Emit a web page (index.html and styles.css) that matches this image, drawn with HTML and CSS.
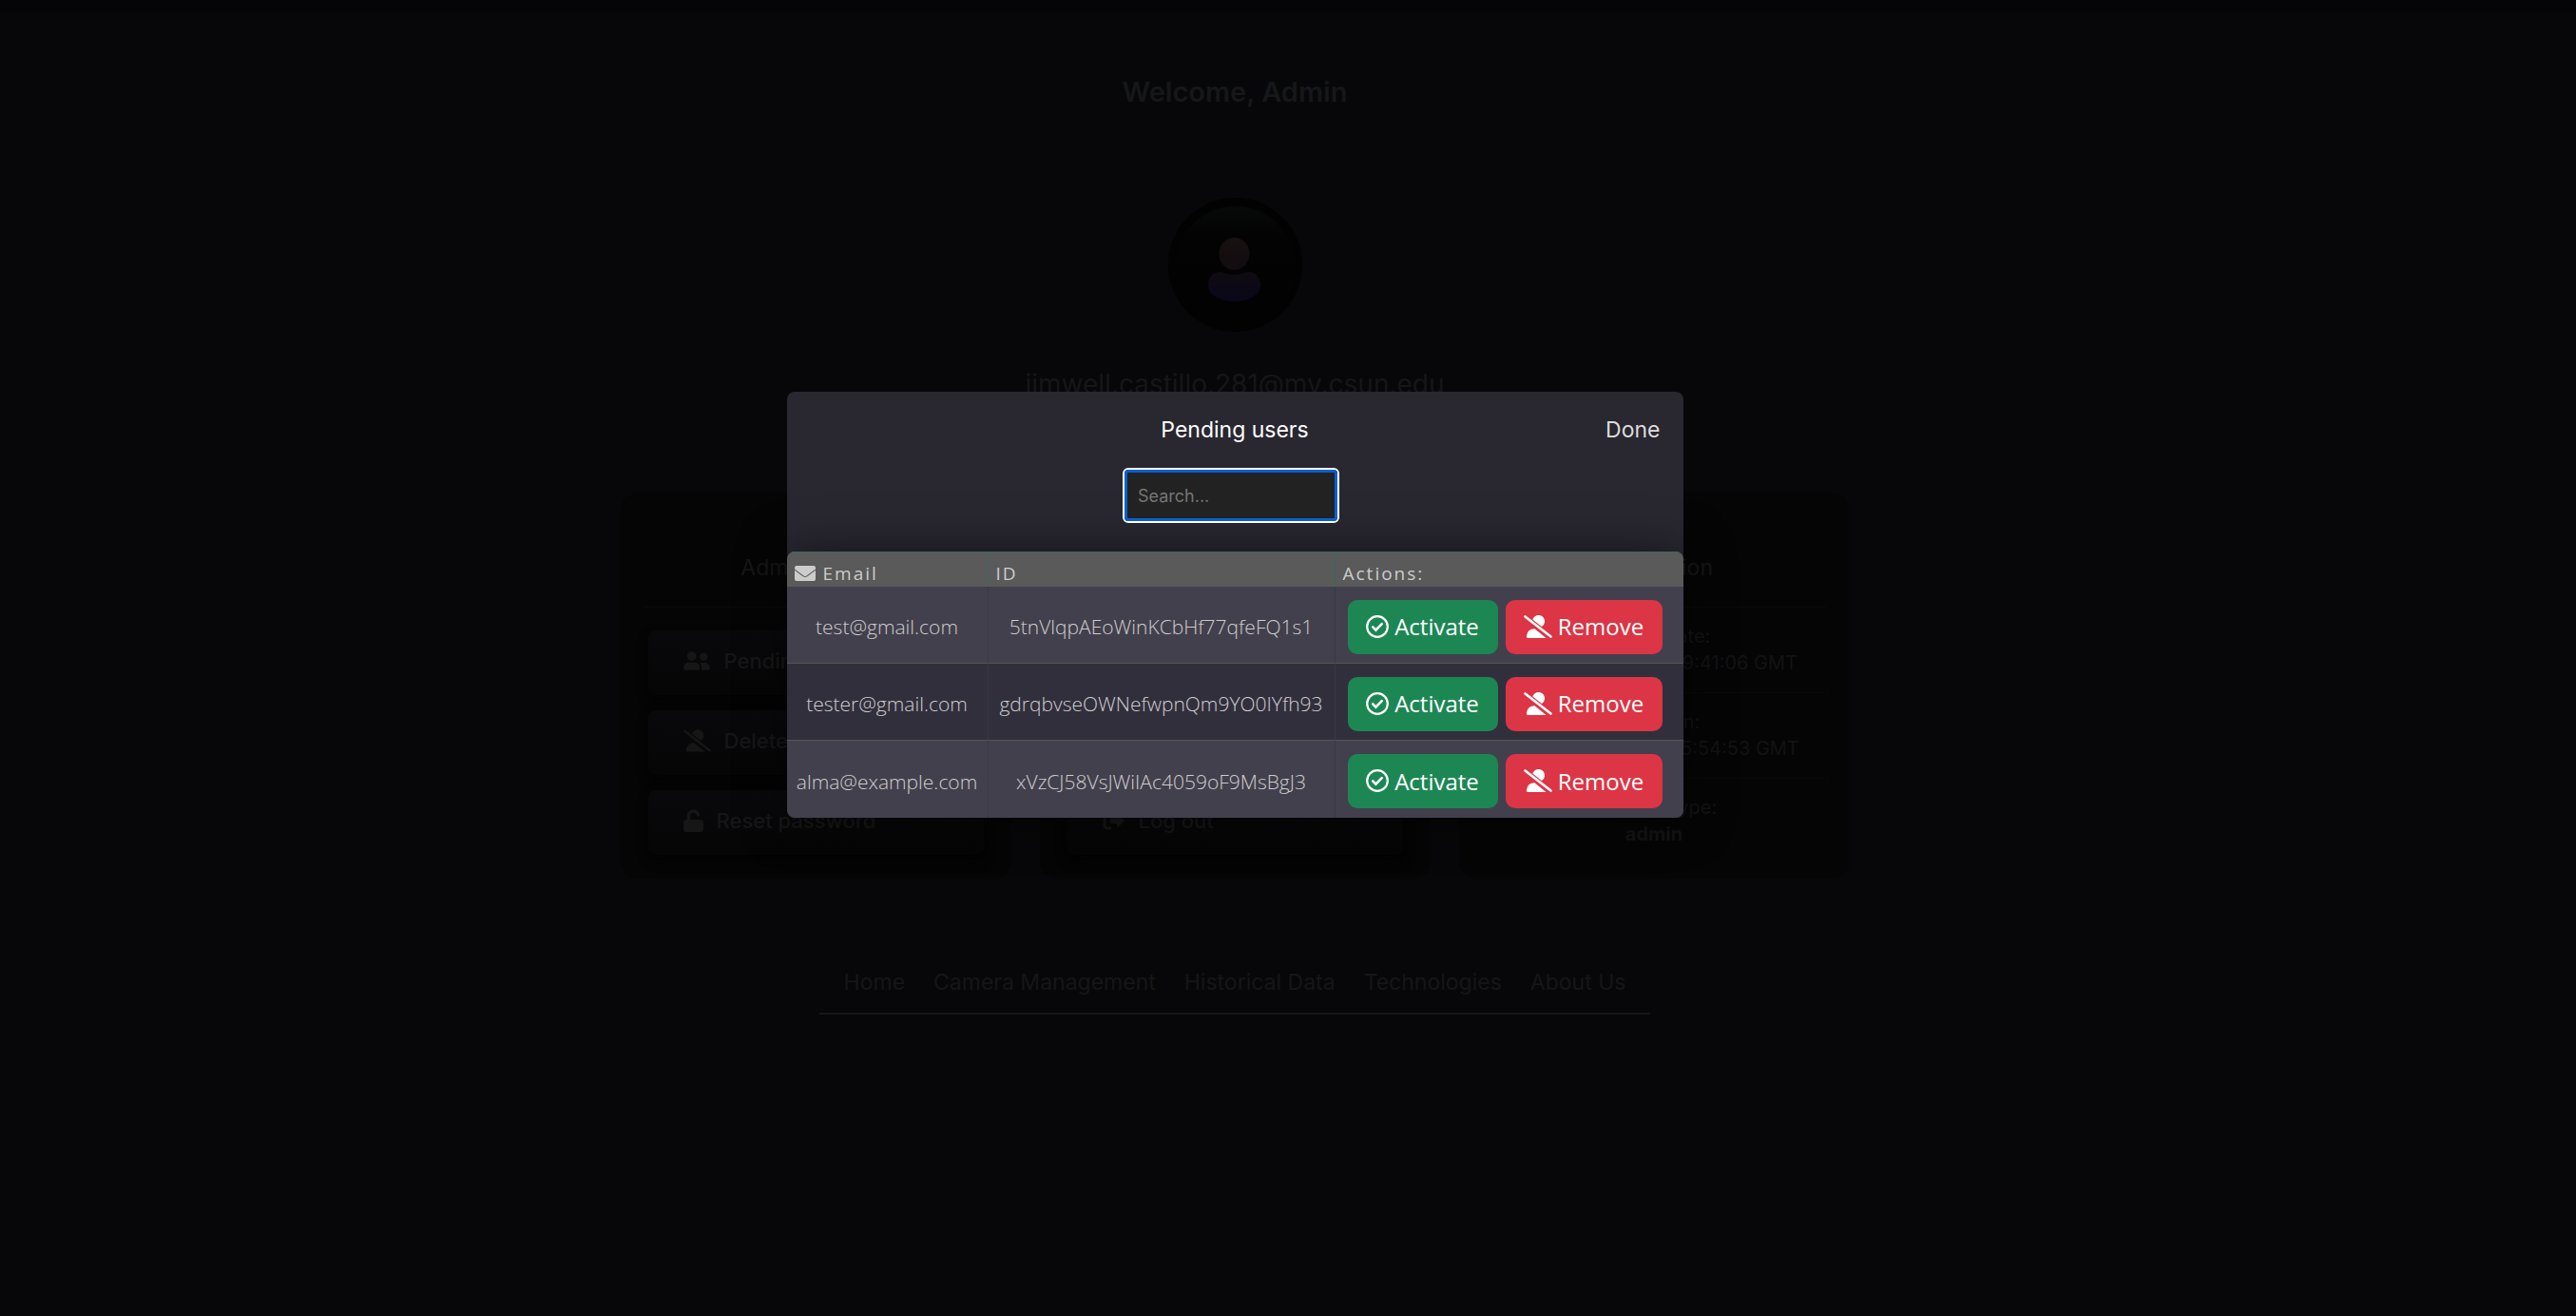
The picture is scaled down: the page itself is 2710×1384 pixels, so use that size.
FILE: index.html
```html
<!DOCTYPE html>
<html lang="en">
<head>
<meta charset="utf-8">
<title>Admin dashboard</title>
<link rel="stylesheet" href="styles.css">
</head>
<body>
<svg class="sprite" aria-hidden="true">
  <symbol id="i-mail" viewBox="0 0 22 16"><path d="M2 0h18a2 2 0 0 1 2 2v1.500l-9.500 7a2.600 2.600 0 0 1-3 0L0 3.500V2a2 2 0 0 1 2-2zM0 4.800l8.700 6.500a4 4 0 0 0 4.600 0L22 4.800V14a2 2 0 0 1-2 2H2a2 2 0 0 1-2-2z"/></symbol>
  <symbol id="i-check" viewBox="0 0 24 24"><circle cx="12" cy="12" r="10.800" fill="none" stroke="currentColor" stroke-width="2.200"/><path d="M7.200 12.400l3.200 3.200 6.300-6.400" fill="none" stroke="currentColor" stroke-width="2.600" stroke-linecap="round"/></symbol>
  <symbol id="i-userx" viewBox="0 0 30 24"><path d="M9.300 4.600A6.500 6.500 0 1 1 18.900 12zM3 21.500a8 8 0 0 1 8.500-7.300l12 9.800H4.300A1.300 1.300 0 0 1 3 22.700z"/><path d="M1.500 1.500l27 21" fill="none" stroke="currentColor" stroke-width="2.600" stroke-linecap="round"/></symbol>
  <symbol id="i-users" viewBox="0 0 30 24"><circle cx="9" cy="7" r="5"/><circle cx="22" cy="7.500" r="4.300"/><path d="M0 20c0-4 3-6.500 6-6.500h6c3 0 6 2.500 6 6.500 0 1-.8 2-2 2H2c-1.200 0-2-1-2-2zM19.500 22c.6-3-.2-6-2-8h6c3 0 5.500 2.500 5.500 6 0 1.200-.8 2-2 2z"/></symbol>
  <symbol id="i-lock" viewBox="0 0 21 24"><path d="M5.500 12V7a5 5 0 0 1 10 0v.500" fill="none" stroke="currentColor" stroke-width="3.600"/><rect y="11" width="21" height="13" rx="3"/></symbol>
  <symbol id="i-exit" viewBox="0 0 24 24"><path d="M9 4H5a3 3 0 0 0-3 3v10a3 3 0 0 0 3 3h4" fill="none" stroke="currentColor" stroke-width="3"/><path d="M8 9h7V4l8 8-8 8v-5H8z"/></symbol>
</svg>

<main class="page" inert>
  <h1 class="welcome">Welcome, Admin</h1>
  <div class="avatar">
    <svg viewBox="0 0 141 141" aria-hidden="true">
      <defs>
        <linearGradient id="ring" x1="0" y1="0" x2="0" y2="1"><stop offset="0" stop-color="#070808"/><stop offset=".25" stop-color="#030303"/><stop offset="1" stop-color="#020202"/></linearGradient>
        <linearGradient id="head" x1="0" y1="0" x2="0" y2="1"><stop offset="0" stop-color="#181110"/><stop offset="1" stop-color="#120b10"/></linearGradient>
        <linearGradient id="torso" x1="0" y1="0" x2="0" y2="1"><stop offset="0" stop-color="#0f0b12"/><stop offset="1" stop-color="#090719"/></linearGradient>
      </defs>
      <circle cx="70.500" cy="70.500" r="70.500" fill="#020203"/>
      <circle cx="70.500" cy="72" r="63" fill="url(#ring)"/>
      <ellipse cx="69.500" cy="59" rx="16" ry="17" fill="url(#head)"/>
      <path d="M55 78q14 6 29 0c8 0 13 6 13 14 0 10-12 17-27 17s-28-7-28-17c0-8 5-14 13-14z" fill="url(#torso)"/>
    </svg>
  </div>
  <p class="account">jimwell.castillo.281@my.csun.edu</p>

  <div class="cards">
    <section class="card">
      <h2>Admin Actions</h2>
      <button class="action" type="button"><svg class="wide"><use href="#i-users"/></svg>Pending users</button>
      <button class="action" type="button"><svg class="wide"><use href="#i-userx"/></svg>Delete users</button>
      <button class="action" type="button"><svg class="slim"><use href="#i-lock"/></svg>Reset password</button>
    </section>
    <section class="card card-end">
      <button class="action" type="button"><svg class="mid"><use href="#i-exit"/></svg>Log out</button>
    </section>
    <section class="card">
      <h2>Information</h2>
      <dl class="facts">
        <div><dt>Signup date:</dt><dd>Sun, 09 Apr 2023 19:41:06 GMT</dd></div>
        <div><dt>Last login:</dt><dd>Sun, 30 Apr 2023 15:54:53 GMT</dd></div>
        <div><dt>Account type:</dt><dd><strong>admin</strong></dd></div>
      </dl>
    </section>
  </div>

  <nav class="links">
    <a href="#">Home</a><a href="#">Camera Management</a><a href="#">Historical Data</a><a href="#">Technologies</a><a href="#">About Us</a>
  </nav>
</main>

<div class="overlay">
  <div class="modal" role="dialog" aria-modal="true" aria-labelledby="modal-title">
    <header class="modal-head">
      <h2 id="modal-title">Pending users</h2>
      <button class="done" type="button">Done</button>
    </header>
    <div class="search"><input type="text" placeholder="Search..." aria-label="Search pending users"></div>
    <table class="users">
      <colgroup><col class="c-email"><col class="c-id"><col></colgroup>
      <thead>
        <tr><th scope="col"><svg class="mail"><use href="#i-mail"/></svg>Email</th><th scope="col">ID</th><th scope="col">Actions:</th></tr>
      </thead>
      <tbody>
        <tr>
          <td>test@gmail.com</td><td>5tnVlqpAEoWinKCbHf77qfeFQ1s1</td>
          <td><div class="buttons"><button class="btn ok" type="button"><svg><use href="#i-check"/></svg>Activate</button><button class="btn no" type="button"><svg class="wide"><use href="#i-userx"/></svg>Remove</button></div></td>
        </tr>
        <tr>
          <td>tester@gmail.com</td><td>gdrqbvseOWNefwpnQm9YO0IYfh93</td>
          <td><div class="buttons"><button class="btn ok" type="button"><svg><use href="#i-check"/></svg>Activate</button><button class="btn no" type="button"><svg class="wide"><use href="#i-userx"/></svg>Remove</button></div></td>
        </tr>
        <tr>
          <td>alma@example.com</td><td>xVzCJ58VsJWiIAc4059oF9MsBgJ3</td>
          <td><div class="buttons"><button class="btn ok" type="button"><svg><use href="#i-check"/></svg>Activate</button><button class="btn no" type="button"><svg class="wide"><use href="#i-userx"/></svg>Remove</button></div></td>
        </tr>
      </tbody>
    </table>
  </div>
</div>
</body>
</html>
```
FILE: styles.css
```css
* { box-sizing: border-box; }

body {
  margin: 0;
  min-height: 100vh;
  background: #070709;
  color: #161617;
  font-family: Inter, "Liberation Sans", sans-serif;
  font-size: 23px;
}

h1, h2, p, dl, dd { margin: 0; }
button { font: inherit; color: inherit; border: 0; cursor: pointer; }
svg { fill: currentColor; flex: none; }
.sprite { position: absolute; width: 0; height: 0; }

/* dimmed dashboard */
.page {
  display: flex;
  flex-direction: column;
  align-items: center;
  padding: 62px 112px 0 0;
  border-top: 13px solid #050507;
}
.welcome { font-size: 29px; line-height: 44px; font-weight: 600; color: #16171a; }
.avatar { margin-top: 89px; width: 141px; height: 141px; }
.avatar svg { display: block; width: 100%; height: 100%; }
.account { margin-top: 33px; font-size: 28px; line-height: 44px; }

.cards {
  display: grid;
  grid-template-columns: repeat(3, 411px);
  gap: 30px;
  margin-top: 92px;
}
.card {
  display: flex;
  flex-direction: column;
  gap: 16px;
  height: 406px;
  padding: 0 29px 25px;
  border-radius: 20px;
  background: #050506;
}
.card-end { justify-content: flex-end; }
.card h2 {
  flex: none;
  margin: 0 -4px 8px;
  padding-top: 61px;
  height: 121px;
  border-bottom: 1px solid #0a0a0b;
  font-size: 23px;
  line-height: 36px;
  font-weight: 400;
  text-align: center;
}
.action {
  display: flex;
  align-items: center;
  gap: 14px;
  height: 68px;
  padding: 0 37px 4px;
  border-radius: 8px;
  background: linear-gradient(#09090b, #050506);
  box-shadow: 0 6px 12px #030303;
  font-size: 22px;
  font-weight: 500;
}
.action svg { height: 24px; }
.action .wide { width: 29px; }
.action .mid { width: 24px; }
.action .slim { width: 21px; }

.facts { margin: -24px -4px 0; font-size: 20px; text-align: center; color: #131314; }
.facts div { height: 90px; padding-top: 16px; border-bottom: 1px solid #0a0a0b; }
.facts div:last-child { height: 76px; border-bottom: 0; }
.facts dt, .facts dd { line-height: 28px; }

.links {
  display: flex;
  gap: 30px;
  margin-top: 87px;
  padding: 0 26px;
  height: 56px;
  border-bottom: 2px solid #161618;
  line-height: 44px;
}
.links a { color: inherit; text-decoration: none; }

/* modal */
.overlay {
  position: fixed;
  inset: 0;
  display: flex;
  justify-content: center;
  align-items: flex-start;
  padding: 412px 112px 0 0;
}
.modal {
  width: 943px;
  border-radius: 8px;
  background: #292730;
  color: #fff;
}
.modal-head {
  display: grid;
  grid-template-columns: 1fr auto 1fr;
  align-items: center;
  height: 80px;
  padding: 0 24px;
}
.modal-head h2 { grid-column: 2; font-size: 23px; line-height: 36px; font-weight: 400; }
.done { justify-self: end; padding: 0; background: none; color: #ddd; line-height: 36px; }
.search { display: flex; justify-content: center; padding-right: 8px; height: 88px; align-items: flex-start; }
.search input {
  width: 228px;
  height: 58px;
  padding: 0 14px;
  border: 2px solid #fff;
  border-radius: 6px;
  outline: 3px solid #0a5fd0;
  outline-offset: -5px;
  background: #222;
  color: #ddd;
  font: 18px Inter, sans-serif;
}
.search input::placeholder { color: #757575; opacity: 1; }

.users {
  width: 100%;
  border-collapse: separate;
  border-spacing: 0;
  table-layout: fixed;
  border-radius: 8px;
  overflow: hidden;
  box-shadow: 0 0 50px rgba(0, 0, 0, .5);
  font-family: "Open Sans", "Noto Sans", sans-serif;
}
.c-email { width: 212px; }
.c-id { width: 365px; }
.users th {
  height: 37px;
  padding: 8px 8px 0;
  background: #5a5a5a;
  border-top: 1px solid #3f6464;
  border-right: 1px solid #3f6464;
  color: #ccc;
  font-size: 19px;
  line-height: 28px;
  font-weight: 400;
  letter-spacing: 2px;
  text-align: left;
}
.mail { width: 22px; height: 16px; margin-right: 8px; vertical-align: -1px; }
.users td {
  height: 81px;
  padding: 4px 0 0;
  background: #43404d;
  border-right: 1px solid #3a3844;
  border-bottom: 1px solid #555;
  color: #ccc;
  font-size: 21px;
  font-weight: 300;
  text-align: center;
}
.users tr:nth-child(2) td { background: #322f3d; }
.users tr:last-child td { border-bottom: 0; }
.users th:last-child, .users td:last-child { border-right: 0; }
.buttons { display: flex; gap: 8px; padding-left: 13px; }
.btn {
  display: flex;
  align-items: center;
  justify-content: center;
  gap: 6px;
  height: 57px;
  padding: 0 0 1px;
  border-radius: 10px;
  color: #fff;
  font-size: 24px;
  font-weight: 400;
}
.btn svg { width: 24px; height: 24px; }
.btn .wide { width: 30px; }
.ok { width: 158px; background: #1d8754; }
.no { width: 165px; background: #dc3545; }
```
